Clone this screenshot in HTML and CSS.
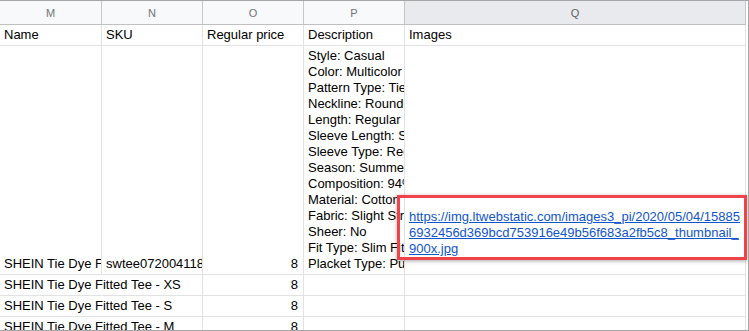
FILE: index.html
```html
<!DOCTYPE html>
<html>
<head>
<meta charset="utf-8">
<link rel="stylesheet" href="styles.css">
</head>
<body>
<div class="frame">
  <div class="sheet">
    <div class="hd">M</div>
    <div class="hd">N</div>
    <div class="hd">O</div>
    <div class="hd">P</div>
    <div class="hd sel">Q</div>

    <div class="c">Name</div>
    <div class="c">SKU</div>
    <div class="c">Regular price</div>
    <div class="c">Description</div>
    <div class="c">Images</div>

    <div class="c">SHEIN Tie Dye Fitted Tee</div>
    <div class="c">swtee072004118</div>
    <div class="c num">8</div>
    <div class="c desc">Style: Casual<br>Color: Multicolor<br>Pattern Type: Tie Dye<br>Neckline: Round Neck<br>Length: Regular<br>Sleeve Length: Short Sleeve<br>Sleeve Type: Regular Sleeve<br>Season: Summer<br>Composition: 94% Cotton<br>Material: Cotton<br>Fabric: Slight Stretch<br>Sheer: No<br>Fit Type: Slim Fit<br>Placket Type: Pullovers</div>
    <div class="c img"><a class="link" href="#">https://img.ltwebstatic.com/images3_pi/2020/05/04/15885<br>6932456d369bcd753916e49b56f683a2fb5c8_thumbnail_<br>900x.jpg</a></div>

    <div class="c span2">SHEIN Tie Dye Fitted Tee - XS</div>
    <div class="c num">8</div>
    <div class="c"></div>
    <div class="c"></div>

    <div class="c span2">SHEIN Tie Dye Fitted Tee - S</div>
    <div class="c num">8</div>
    <div class="c"></div>
    <div class="c"></div>

    <div class="c span2">SHEIN Tie Dye Fitted Tee - M</div>
    <div class="c num">8</div>
    <div class="c"></div>
    <div class="c"></div>
  </div>
  <div class="callout"></div>
</div>
</body>
</html>
```

FILE: styles.css
```css
html, body {
  margin: 0;
  padding: 0;
  background: #ffffff;
}

.frame {
  position: relative;
  width: 749px;
  height: 331px;
  box-sizing: border-box;
  border-top: 1px solid #a6a6a6;
  border-right: 1px solid #a6a6a6;
  border-bottom: 1px solid #a6a6a6;
  overflow: hidden;
  background: #ffffff;
}

.sheet {
  display: grid;
  grid-template-columns: 102px 101px 101px 101px 341px;
  grid-template-rows: 24px 21px 229px 21px 21px 21px;
  font-family: "Liberation Sans", Arial, sans-serif;
  font-size: 13px;
  line-height: 16px;
  color: #000000;
}

.hd {
  box-sizing: border-box;
  background: #f8f9fa;
  border-right: 1px solid #c4c7c5;
  border-bottom: 1px solid #c0c0c0;
  display: flex;
  align-items: center;
  justify-content: center;
  font-size: 11px;
  color: #70757a;
}

.hd.sel {
  background: #e8eaed;
  color: #5f6368;
}

.c {
  box-sizing: border-box;
  border-right: 1px solid #e2e2e2;
  border-bottom: 1px solid #e2e2e2;
  padding: 0 3px 2px 4px;
  display: flex;
  flex-direction: column;
  justify-content: flex-end;
  white-space: nowrap;
  overflow: hidden;
}

.num {
  align-items: flex-end;
  padding-right: 5px;
}

.span2 {
  grid-column: span 2;
}

.img {
  padding-bottom: 17px;
}

.link {
  color: #1155cc;
  text-decoration: underline;
}

.callout {
  position: absolute;
  left: 397px;
  top: 194px;
  width: 350px;
  height: 65px;
  box-sizing: border-box;
  border: 3px solid #ef4349;
  box-shadow: 0 1px 4px rgba(0, 0, 0, 0.35);
}
```
